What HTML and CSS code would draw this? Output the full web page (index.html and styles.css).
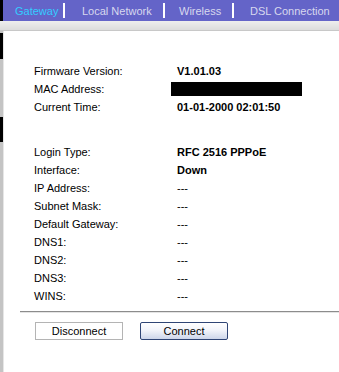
FILE: index.html
```html
<!DOCTYPE html>
<html>
<head>
<meta charset="utf-8">
<link rel="stylesheet" href="styles.css">
</head>
<body>
<div class="nav">
  <span class="tab active t1">Gateway</span><span class="sep s1"></span>
  <span class="tab t2">Local Network</span><span class="sep s2"></span>
  <span class="tab t3">Wireless</span><span class="sep s3"></span>
  <span class="tab t4">DSL Connection</span>
</div>
<div class="band"></div>
<div class="main">
  <div class="side">
    <div class="blk b1"></div>
    <div class="blk b2"></div>
  </div>
  <div class="content">
    <div class="group g1">
      <div class="row"><span class="lbl">Firmware Version:</span><span class="val">V1.01.03</span></div>
      <div class="row"><span class="lbl">MAC Address:</span><span class="redact"></span></div>
      <div class="row"><span class="lbl">Current Time:</span><span class="val">01-01-2000 02:01:50</span></div>
    </div>
    <div class="group g2">
      <div class="row"><span class="lbl">Login Type:</span><span class="val">RFC 2516 PPPoE</span></div>
      <div class="row"><span class="lbl">Interface:</span><span class="val">Down</span></div>
      <div class="row"><span class="lbl">IP Address:</span><span class="plain">---</span></div>
      <div class="row"><span class="lbl">Subnet Mask:</span><span class="plain">---</span></div>
      <div class="row"><span class="lbl">Default Gateway:</span><span class="plain">---</span></div>
      <div class="row"><span class="lbl">DNS1:</span><span class="plain">---</span></div>
      <div class="row"><span class="lbl">DNS2:</span><span class="plain">---</span></div>
      <div class="row"><span class="lbl">DNS3:</span><span class="plain">---</span></div>
      <div class="row"><span class="lbl">WINS:</span><span class="plain">---</span></div>
    </div>
    <div class="rule"></div>
    <div class="buttons">
      <button class="btn plainbtn">Disconnect</button>
      <button class="btn xpbtn">Connect</button>
    </div>
  </div>
</div>
</body>
</html>
```
FILE: styles.css
```css
html, body {
  margin: 0;
  padding: 0;
  background: #ffffff;
  font-family: "Liberation Sans", Arial, sans-serif;
  font-size: 11px;
  color: #000;
}
.nav {
  height: 21px;
  background: #6464c8;
  border-left: 3px solid #000;
  display: flex;
  align-items: center;
  box-sizing: border-box;
  padding-left: 12px;
  white-space: nowrap;
  overflow: hidden;
}
.tab {
  color: #d8d8ee;
  font-size: 11px;
  flex: none;
}
.tab.active {
  color: #33ccff;
}
.t1 { width: 43px; }
.t2 { width: 70px; }
.t3 { width: 43px; }
.sep {
  flex: none;
  width: 2px;
  height: 15px;
  background: #ffffff;
}
.s1 { margin: 0 17px 0 5px; }
.s2 { margin: 0 14px 0 11px; }
.s3 { margin: 0 16px 0 10px; }
.band {
  height: 9px;
  background: linear-gradient(#eeeeee, #dcdcdc);
  border-bottom: 1px solid #c8c8c8;
}
.main {
  display: flex;
  height: 342px;
}
.side {
  width: 3px;
  background: #c4c4c4;
  border-right: 1px solid #e6e6e6;
  display: flex;
  flex-direction: column;
}
.blk {
  background: #000;
}
.b1 { height: 26px; margin-top: 2px; }
.b2 { height: 25px; margin-top: 58px; }
.content {
  flex: 1;
  padding-left: 30px;
}
.group.g1 { padding-top: 31px; }
.group.g2 { padding-top: 27px; }
.row {
  display: flex;
  height: 18px;
  align-items: center;
}
.lbl {
  width: 143px;
}
.val {
  font-weight: bold;
}
.plain {
  color: #000;
}
.redact {
  display: inline-block;
  width: 131px;
  height: 14px;
  background: #000;
  margin-left: -6px;
}
.rule {
  margin: 6px 0 0 -14px;
  height: 1px;
  background: #8c8c8c;
  border-bottom: 1px solid #e4e4e4;
}
.buttons {
  display: flex;
  gap: 17px;
  padding-top: 9px;
  padding-left: 1px;
}
.btn {
  width: 88px;
  height: 18px;
  font-family: "Liberation Sans", Arial, sans-serif;
  font-size: 11px;
  padding: 0;
  color: #000;
  box-sizing: border-box;
}
.plainbtn {
  background: #ffffff;
  border: 1px solid #b4b4b4;
}
.xpbtn {
  background: linear-gradient(#ffffff 0%, #f2f4fa 45%, #cdd6ea 100%);
  border: 1px solid #2f4575;
  border-radius: 2px;
}
```
